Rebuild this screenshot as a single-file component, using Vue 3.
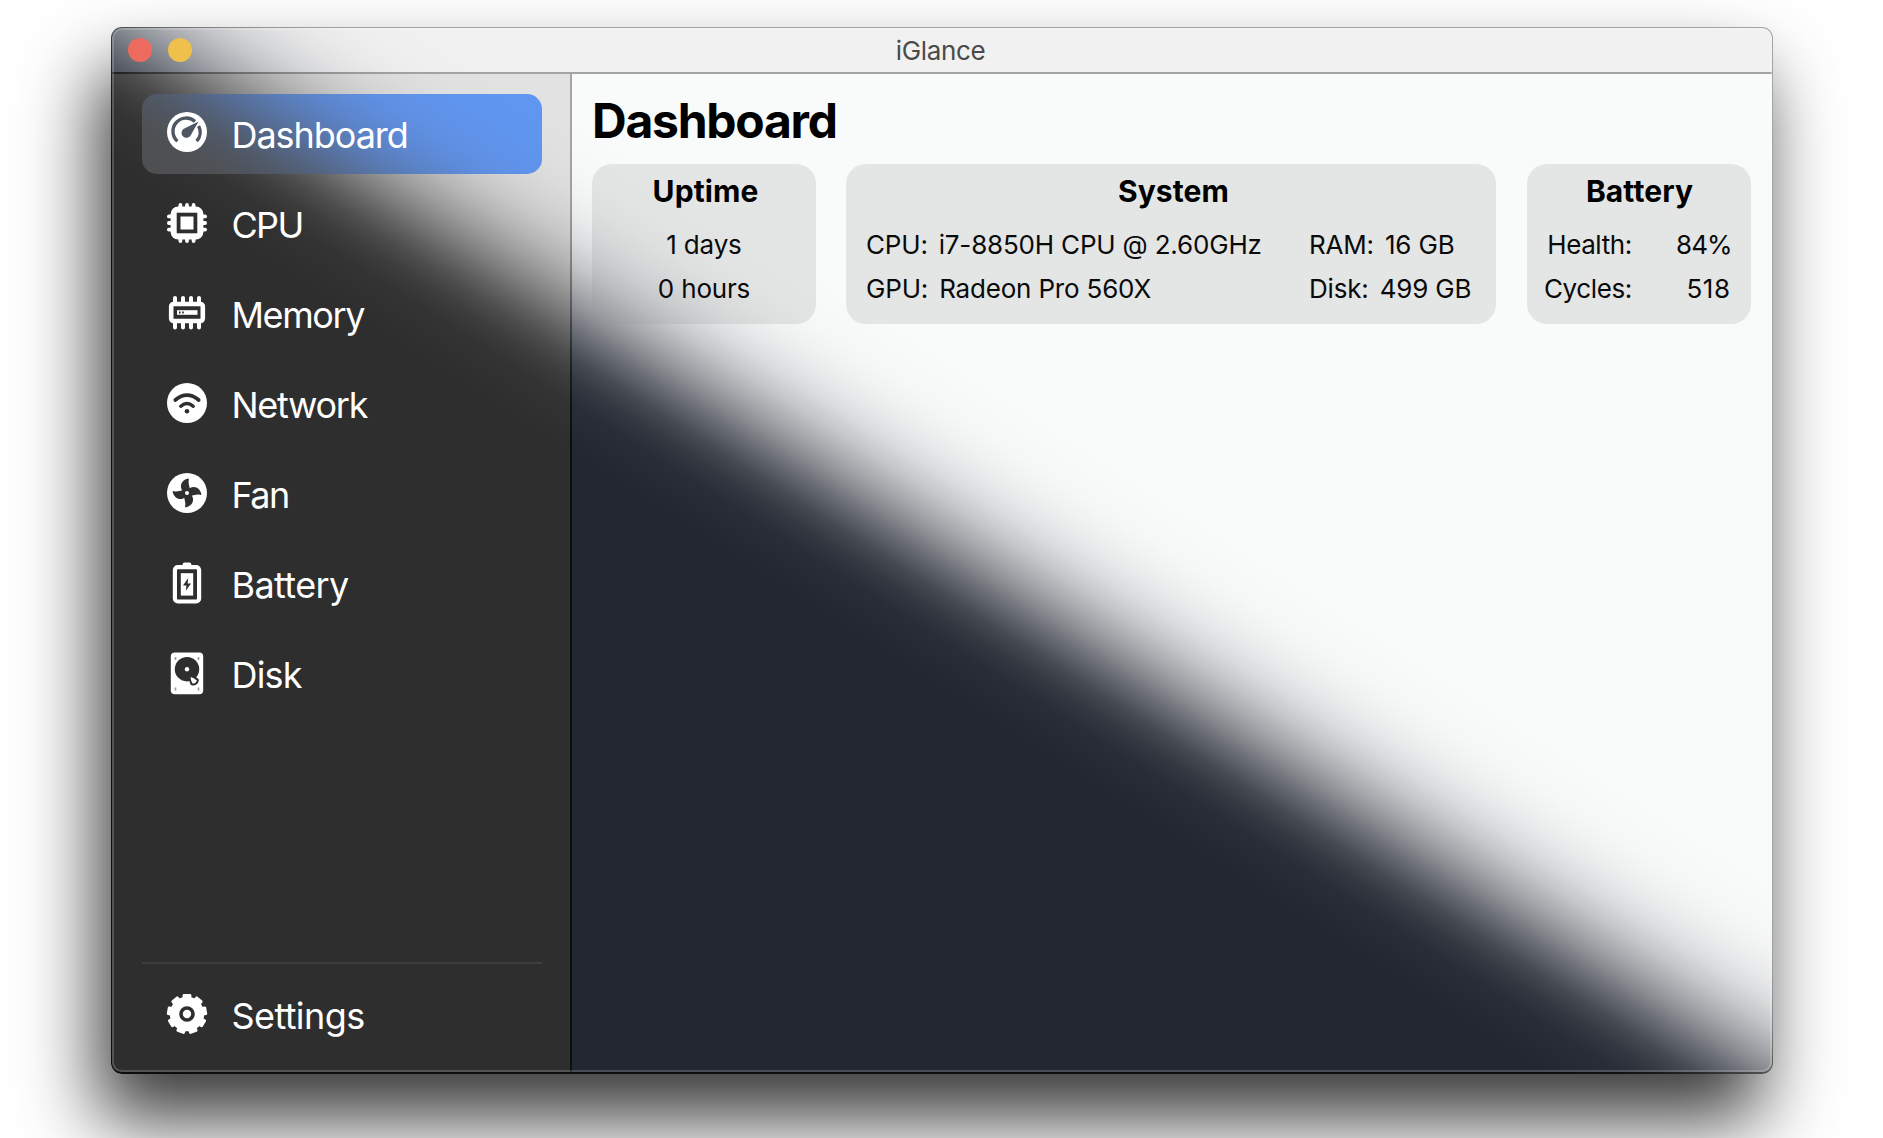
<script setup>
const items = [
  { name: 'Dashboard', icon: 'gauge', tracking: -1.05 },
  { name: 'CPU', icon: 'cpu', tracking: -1.7 },
  { name: 'Memory', icon: 'memory', tracking: -1.4 },
  { name: 'Network', icon: 'network', tracking: -1.3 },
  { name: 'Fan', icon: 'fan', tracking: -1.6 },
  { name: 'Battery', icon: 'battery', tracking: -0.6 },
  { name: 'Disk', icon: 'disk', tracking: -0.8 },
]
const pins = [-6.6, 0, 6.6]
const teeth = [0, 40, 80, 120, 160, 200, 240, 280, 320]
</script>

<template>
  <div class="desktop">
    <div class="window surface">
      <header class="titlebar surface">
        <span class="light red"></span>
        <span class="light yellow"></span>
        <span class="title">iGlance</span>
      </header>
      <div class="body">
        <nav class="sidebar surface">
          <div
            v-for="(item, i) in items"
            :key="item.name"
            class="item"
            :class="{ active: i === 0, surface: i === 0 }"
          >
            <svg class="icon" viewBox="-20 -20 40 40">
              <g v-if="item.icon === 'gauge'">
                <circle r="20" fill="#fff" />
                <path d="M-9.6 9.2A13.2 13.2 0 0 1 8 -10.6M11.6 -6A13.2 13.2 0 0 1 9.6 9.2" fill="none" stroke="#4e5664" stroke-width="3.4" />
                <path d="M11.5 -10.5L3.6 3.4A4.9 4.9 0 1 1 -3.6 -3Z" fill="#4e5664" />
              </g>
              <g v-else-if="item.icon === 'cpu'" fill="#fff">
                <rect x="-16.4" y="-16.4" width="32.8" height="32.8" rx="7.5" />
                <g v-for="p in pins" :key="p">
                  <rect :x="p - 1.9" y="-20" width="3.8" height="40" rx="1.9" />
                  <rect x="-20" :y="p - 1.9" width="40" height="3.8" rx="1.9" />
                </g>
                <rect x="-8.4" y="-8.4" width="16.8" height="16.8" stroke="#2e2e2e" stroke-width="3.8" />
              </g>
              <g v-else-if="item.icon === 'memory'" fill="#fff">
                <rect v-for="p in [-12, -4, 4, 12]" :key="p" :x="p - 2" y="-17" width="4" height="33.4" rx="2" />
                <rect x="-15.8" y="-9" width="31.6" height="17" rx="2.5" fill="#2e2e2e" stroke="#fff" stroke-width="4.6" />
                <rect x="-10" y="-2.8" width="20.5" height="4.6" />
                <path d="M-8 -.5h1.6M-4.8 -.5h1.6" stroke="#2e2e2e" stroke-width="2" />
              </g>
              <g v-else-if="item.icon === 'network'" fill="none" stroke="#2e2e2e" stroke-linecap="round">
                <circle r="20" fill="#fff" stroke="none" />
                <path d="M-11.7 -3Q0 -12.6 11.7 -3" stroke-width="3.7" />
                <path d="M-6.2 3.2Q0 -2.2 6.2 3.2" stroke-width="3.5" />
                <circle cy="8.3" r="2.3" fill="#2e2e2e" stroke="none" />
              </g>
              <g v-else-if="item.icon === 'fan'">
                <circle r="20" fill="#fff" />
                <path
                  v-for="a in [0, 90, 180, 270]"
                  :key="a"
                  :transform="`rotate(${a})`"
                  d="M-3 0C-8.8 -6 -6 -12.8 1.2 -14.4Q2.2 -14.2 1.8 -13C.9 -9.6 3 -6 3.6 0Z"
                  fill="#2e2e2e"
                />
                <circle r="3.8" fill="#2e2e2e" />
                <circle r="2" fill="#fff" />
              </g>
              <g v-else-if="item.icon === 'battery'" fill="#fff">
                <path d="M-4.4 -17V-18.2Q-4.4 -20.4 -2.2 -20.4H2.2Q4.4 -20.4 4.4 -18.2V-17Z" />
                <rect x="-12.1" y="-15.9" width="24.2" height="34.4" rx="3" fill="#2e2e2e" stroke="#fff" stroke-width="4.2" />
                <rect x="-6.2" y="-9.8" width="12.4" height="22.4" />
                <path d="M1.2 -5L-4 2.4H-.6L-1.2 7.8L4 .4H.6Z" fill="#2e2e2e" />
              </g>
              <g v-else fill="#2e2e2e">
                <rect x="-16.2" y="-20.4" width="32.4" height="41.6" rx="4" fill="#fff" />
                <circle r="12.2" cy="-3.8" />
                <circle r="2.2" cy="-3.8" fill="#fff" />
                <path d="M2.4 2.4Q8 3.6 10.9 7.2A4.6 4.6 0 0 1 4.4 11Q2.6 7.4 2.4 2.4Z" fill="#fff" stroke="#2e2e2e" stroke-width="2" />
                <path d="M-11.5 -16v3M11.5 -16v3M-11.5 14.5v3M11.5 14.5v3" stroke="#999" stroke-width="1.6" />
              </g>
            </svg>
            <span :style="{ letterSpacing: item.tracking + 'px' }">{{ item.name }}</span>
          </div>
          <div class="footer">
            <div class="item">
              <svg class="icon" viewBox="-20 -20 40 40">
                <circle r="17.2" fill="#fff" />
                <rect v-for="t in teeth" :key="t" x="-4.4" y="-20" width="8.8" height="9" rx="1.4" fill="#fff" :transform="`rotate(${t})`" />
                <circle r="6" fill="#fff" stroke="#2e2e2e" stroke-width="3.6" />
              </svg>
              <span>Settings</span>
            </div>
          </div>
        </nav>
        <main class="content surface">
          <h1>Dashboard</h1>
          <div class="cards">
            <section class="card uptime surface">
              <h2>Uptime</h2>
              <p>1 days</p>
              <p>0 hours</p>
            </section>
            <section class="card system surface">
              <h2>System</h2>
              <div class="cols">
                <div class="left">
                  <p><span>CPU:</span><span>i7-8850H CPU @ 2.60GHz</span></p>
                  <p><span>GPU:</span><span>Radeon Pro 560X</span></p>
                </div>
                <div>
                  <p><span>RAM:</span><span>16 GB</span></p>
                  <p><span>Disk:</span><span>499 GB</span></p>
                </div>
              </div>
            </section>
            <section class="card battery surface">
              <h2>Battery</h2>
              <div class="cols">
                <div class="labels"><p>Health:</p><p>Cycles:</p></div>
                <div class="values"><p class="percent">84%</p><p class="count">518</p></div>
              </div>
            </section>
          </div>
        </main>
      </div>
    </div>
  </div>
</template>

<style>
body {
  background: #fff;
  overflow: hidden;
}
</style>

<style scoped>
* {
  box-sizing: border-box;
}
.desktop {
  width: 1883px;
  height: 1138px;
  padding: 27px 110px 0 111px;
  overflow: hidden;
  background: #fff;
  font-family: Inter, "Liberation Sans", sans-serif;
}
/* Diagonal blend of the dark and light appearance, shared by all surfaces */
.surface {
  background: linear-gradient(
    32.5deg,
    var(--dark) 45%,
    color-mix(in srgb, var(--light) 3%, var(--dark)) 47%,
    color-mix(in srgb, var(--light) 8%, var(--dark)) 48%,
    color-mix(in srgb, var(--light) 17%, var(--dark)) 49%,
    color-mix(in srgb, var(--light) 31%, var(--dark)) 50%,
    color-mix(in srgb, var(--light) 47%, var(--dark)) 51%,
    color-mix(in srgb, var(--light) 62%, var(--dark)) 52%,
    color-mix(in srgb, var(--light) 75%, var(--dark)) 53%,
    color-mix(in srgb, var(--light) 85%, var(--dark)) 54%,
    color-mix(in srgb, var(--light) 92%, var(--dark)) 55%,
    color-mix(in srgb, var(--light) 96%, var(--dark)) 56%,
    color-mix(in srgb, var(--light) 98.5%, var(--dark)) 57%,
    var(--light) 59%
  ) fixed;
}
.window {
  --light: #a4a4a4;
  --dark: #0c0d0f;
  position: relative;
  width: 1662px;
  height: 1047px;
  padding: 1px 1px 2px;
  border-radius: 11px;
  display: flex;
  flex-direction: column;
  box-shadow: -13px 45px 76px rgba(0, 0, 0, 0.78);
}
.window::after {
  content: "";
  position: absolute;
  inset: 1px 1px 2px;
  border: 2px solid rgba(255, 255, 255, 0.18);
  border-radius: 10px;
}
.titlebar {
  --light: #f1f1f1;
  --dark: #353c48;
  height: 44px;
  flex: none;
  border-radius: 10px 10px 0 0;
  display: flex;
  align-items: center;
  padding-left: 16px;
  gap: 16px;
}
.light {
  width: 24px;
  height: 24px;
  border-radius: 50%;
}
.red {
  background: #ed6a5f;
}
.yellow {
  background: #f0c04c;
}
.title {
  flex: 1;
  padding: 1px 97px 0 0;
  margin-left: -2px;
  text-align: center;
  font-size: 26px;
  letter-spacing: -0.35px;
  color: #4a4a4a;
}
.body {
  flex: 1;
  margin-top: 2px;
  display: flex;
  gap: 2px;
}
.sidebar {
  --light: #e2e2e2;
  --dark: #2e2e2e;
  width: 458px;
  padding: 20px 28px 16px 29.5px;
  border-radius: 0 0 0 9px;
  display: flex;
  flex-direction: column;
  gap: 9px;
}
.item {
  height: 81px;
  flex: none;
  padding-left: 25.5px;
  border-radius: 15px;
  display: flex;
  align-items: center;
  gap: 24.5px;
  font-size: 36px;
  letter-spacing: -0.6px;
  color: #fff;
}
.active {
  --light: #6096f1;
  --dark: #4e4e4f;
  height: 80px;
  margin-bottom: 1px;
}
.active span {
  padding-top: 1px;
}
.icon {
  width: 40px;
  height: 40px;
  margin-bottom: 4px;
  overflow: visible;
}
.footer {
  margin-top: auto;
  border-top: 2px solid #3e3e3e;
  padding-top: 11px;
}
.content {
  --light: #f9fafa;
  --dark: #222731;
  flex: 1;
  border-radius: 0 0 9px 0;
  padding: 19px 21px 0 20px;
}
h1,
h2,
p {
  margin: 0;
}
h1 {
  font-size: 48px;
  line-height: 56px;
  letter-spacing: -1.25px;
  color: #000;
}
.cards {
  display: flex;
  gap: 30px;
  margin-top: 15px;
}
.card {
  --light: #e4e5e5;
  --dark: #393e47;
  height: 160px;
  border-radius: 20px;
  padding-top: 9px;
  color: #0a0a0a;
}
h2 {
  font-size: 30px;
  line-height: 36px;
  text-align: center;
  color: #000;
  margin-bottom: 14px;
  padding-left: 3px;
  letter-spacing: 0.1px;
}
p {
  font-size: 26px;
  line-height: 44px;
  letter-spacing: -0.18px;
  white-space: nowrap;
}
.uptime {
  width: 224px;
  text-align: center;
}
.system {
  width: 650px;
}
.system h2 {
  padding-left: 5px;
}
.battery {
  width: 224px;
  margin-left: 0.5px;
}
.battery h2 {
  padding-left: 2px;
}
.cols {
  display: flex;
}
.system .cols {
  padding-left: 20px;
}
.system p {
  display: flex;
  gap: 11px;
}
.left {
  width: 443px;
}
.battery .cols {
  justify-content: space-between;
  padding: 0 20px 0 17.5px;
}
.labels p {
  letter-spacing: -0.4px;
}
.labels,
.values {
  text-align: right;
}
.values .percent {
  letter-spacing: -1px;
  margin-right: -1px;
}
.values .count {
  letter-spacing: 0.5px;
}
</style>
